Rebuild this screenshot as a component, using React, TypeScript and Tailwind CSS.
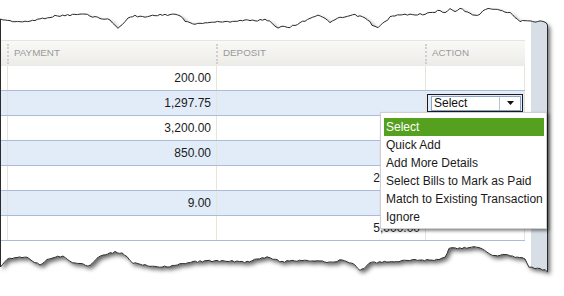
import React from "react";

type Pt = [number, number];

// torn paper outline, traced from the screenshot
const TOP: Pt[] = [
  [0.5, 19], [10, 21], [25, 22], [40, 19], [55, 16], [70, 15], [85, 14], [90, 16], [100, 18], [110, 20],
  [115, 25], [118, 29], [122, 24], [128, 18], [135, 16], [145, 17], [155, 15], [165, 15], [175, 14],
  [180, 16], [185, 21], [190, 23], [200, 24], [210, 22], [225, 22], [245, 20], [255, 21], [265, 19],
  [272, 23], [278, 28], [282, 26], [290, 27], [300, 23], [310, 18], [318, 15], [325, 19], [330, 22],
  [340, 18], [355, 15], [365, 18], [370, 22], [372, 26], [378, 27], [385, 22], [390, 17], [400, 15],
  [425, 14], [435, 12], [440, 10], [445, 13], [450, 9], [455, 12], [460, 8], [465, 11], [470, 13],
  [475, 16], [480, 14], [483, 10], [488, 8], [500, 10], [510, 13], [515, 17], [520, 21], [535, 22],
  [540, 21], [546, 22], [547.5, 25],
];

const BOTTOM: Pt[] = [
  [547.5, 272], [545, 270], [535, 268], [529, 267], [525, 259], [522, 257], [515, 257], [505, 254],
  [495, 256], [487, 252], [482, 249], [479, 247], [469, 248], [455, 248], [449, 249], [445, 257],
  [439, 260], [415, 260], [399, 261], [382, 262], [369, 263], [364, 268], [360, 270], [352, 263],
  [342, 260], [332, 262], [315, 261], [302, 261], [292, 260], [282, 262], [273, 259], [267, 257],
  [247, 262], [227, 261], [207, 261], [193, 262], [180, 264], [167, 267], [150, 266], [133, 263],
  [127, 257], [122, 253], [115, 252], [103, 255], [97, 258], [88, 267], [80, 263], [70, 262],
  [63, 256], [55, 257], [47, 259], [40, 265], [32, 261], [27, 257], [17, 257], [7, 259], [0.5, 267],
];

function noise(i: number) {
  const s = Math.sin(i * 12.9898 + 78.233) * 43758.5453;
  return s - Math.floor(s);
}

function roughen(pts: Pt[], seed: number) {
  const out: string[] = [];
  let k = seed;
  for (let i = 0; i < pts.length - 1; i++) {
    const [x1, y1] = pts[i];
    const [x2, y2] = pts[i + 1];
    const steps = Math.max(1, Math.round(Math.abs(x2 - x1) / 2.5));
    for (let s = 0; s < steps; s++) {
      const t = s / steps;
      const j = i === 0 && s === 0 ? 0 : (noise(k++) - 0.5) * 1.6;
      out.push(`${(x1 + (x2 - x1) * t).toFixed(1)},${(y1 + (y2 - y1) * t + j).toFixed(1)}`);
    }
  }
  const [lx, ly] = pts[pts.length - 1];
  out.push(`${lx},${ly}`);
  return out;
}

const paperPath = "M" + [...roughen(TOP, 1), ...roughen(BOTTOM, 500)].join(" L") + " Z";

const rows = [
  { pay: "200.00", dep: "", blue: false },
  { pay: "1,297.75", dep: "", blue: true, select: true },
  { pay: "3,200.00", dep: "", blue: false },
  { pay: "850.00", dep: "", blue: true },
  { pay: "", dep: "2,500.00", blue: false },
  { pay: "9.00", dep: "", blue: true },
  { pay: "", dep: "5,000.00", blue: false },
];

const menuItems = [
  "Select",
  "Quick Add",
  "Add More Details",
  "Select Bills to Mark as Paid",
  "Match to Existing Transaction",
  "Ignore",
];

function HeaderCell({ label }: { label: string }) {
  return (
    <div className="flex items-center">
      <div className="h-[20px] w-0 border-l-2 border-dotted border-[#cfcfcf]" />
      <span className="ml-[5px] text-[9.8px] text-[#9a9a9a] tracking-[0px]">{label}</span>
    </div>
  );
}

function SelectBox() {
  return (
    <div className="ml-[1px] flex h-[18px] w-[96px] items-center border border-[#1b1b1b] pl-[3px] pr-[1px]">
      <div className="flex h-[15px] flex-1 items-center border border-[#8aa4c4] bg-white">
        <span className="flex-1 pl-[2px] text-[12px] leading-none text-[#111]">Select</span>
        <div className="flex h-full w-[21px] items-center justify-center border-l border-[#b5c4d8]">
          <svg width="7" height="4" viewBox="0 0 7 4">
            <path d="M0 0 L7 0 L3.5 4 Z" fill="#111" />
          </svg>
        </div>
      </div>
    </div>
  );
}

export default function App() {
  return (
    <div className="relative h-[296px] w-[564px] overflow-hidden bg-white font-['Liberation_Sans',Arial,sans-serif]">
      {/* torn paper */}
      <svg className="absolute inset-0" width="564" height="296" viewBox="0 0 564 296">
        <defs>
          <filter id="paperShadow" x="-5%" y="-5%" width="115%" height="120%">
            <feDropShadow dx="2.5" dy="3" stdDeviation="2" floodColor="#000" floodOpacity="0.6" />
          </filter>
          <clipPath id="paperClip">
            <path d={paperPath} />
          </clipPath>
        </defs>
        <path d={paperPath} fill="#fff" filter="url(#paperShadow)" />
        <rect x="531" y="0" width="17" height="296" fill="#d7dee5" clipPath="url(#paperClip)" />
        <path d={paperPath} fill="none" stroke="#2b2b2b" strokeWidth="1" />
      </svg>

      {/* grid */}
      <div className="relative pl-[1px] pt-[40px]">
        <div className="w-[524px]">
          <div className="grid h-[26px] grid-cols-[6px_209px_209px_100px] border-t border-[#e9e5da] bg-gradient-to-b from-[#f9f9f7] to-[#ecebe7]">
            <div />
            <HeaderCell label="PAYMENT" />
            <HeaderCell label="DEPOSIT" />
            <HeaderCell label="ACTION" />
          </div>

          {rows.map((r, i) => (
            <div
              key={i}
              className={`grid h-[25px] grid-cols-[6px_209px_209px_100px] border-b border-[#a9bcd8] text-[12px] text-[#1a1a1a] ${
                r.blue ? "bg-[#e2ecf9]" : "bg-white"
              }`}
            >
              <div />
              <div className="flex items-center justify-end border-l border-[#e7e4db] pr-[5px]">{r.pay}</div>
              <div className="flex items-center justify-end border-l border-[#e7e4db] pr-[5px]">{r.dep}</div>
              <div className="flex items-center border-l border-r border-[#e7e4db]">
                {r.select && <SelectBox />}
              </div>
            </div>
          ))}
        </div>
      </div>

      {/* open dropdown */}
      <div className="absolute left-[380px] top-[112px] h-[117px] w-[167px] border border-[#cfcfcf] bg-white px-[1px] pt-[5px] shadow-[2px_2px_3px_rgba(0,0,0,0.45)]">
        {menuItems.map((m, i) => (
          <div
            key={m}
            className={`ml-[2px] mr-[1px] h-[18px] pl-[2px] text-[12px] leading-[18px] ${
              i === 0 ? "bg-[#55a01f] text-white" : "text-[#1a1a1a]"
            }`}
          >
            {m}
          </div>
        ))}
      </div>
    </div>
  );
}
